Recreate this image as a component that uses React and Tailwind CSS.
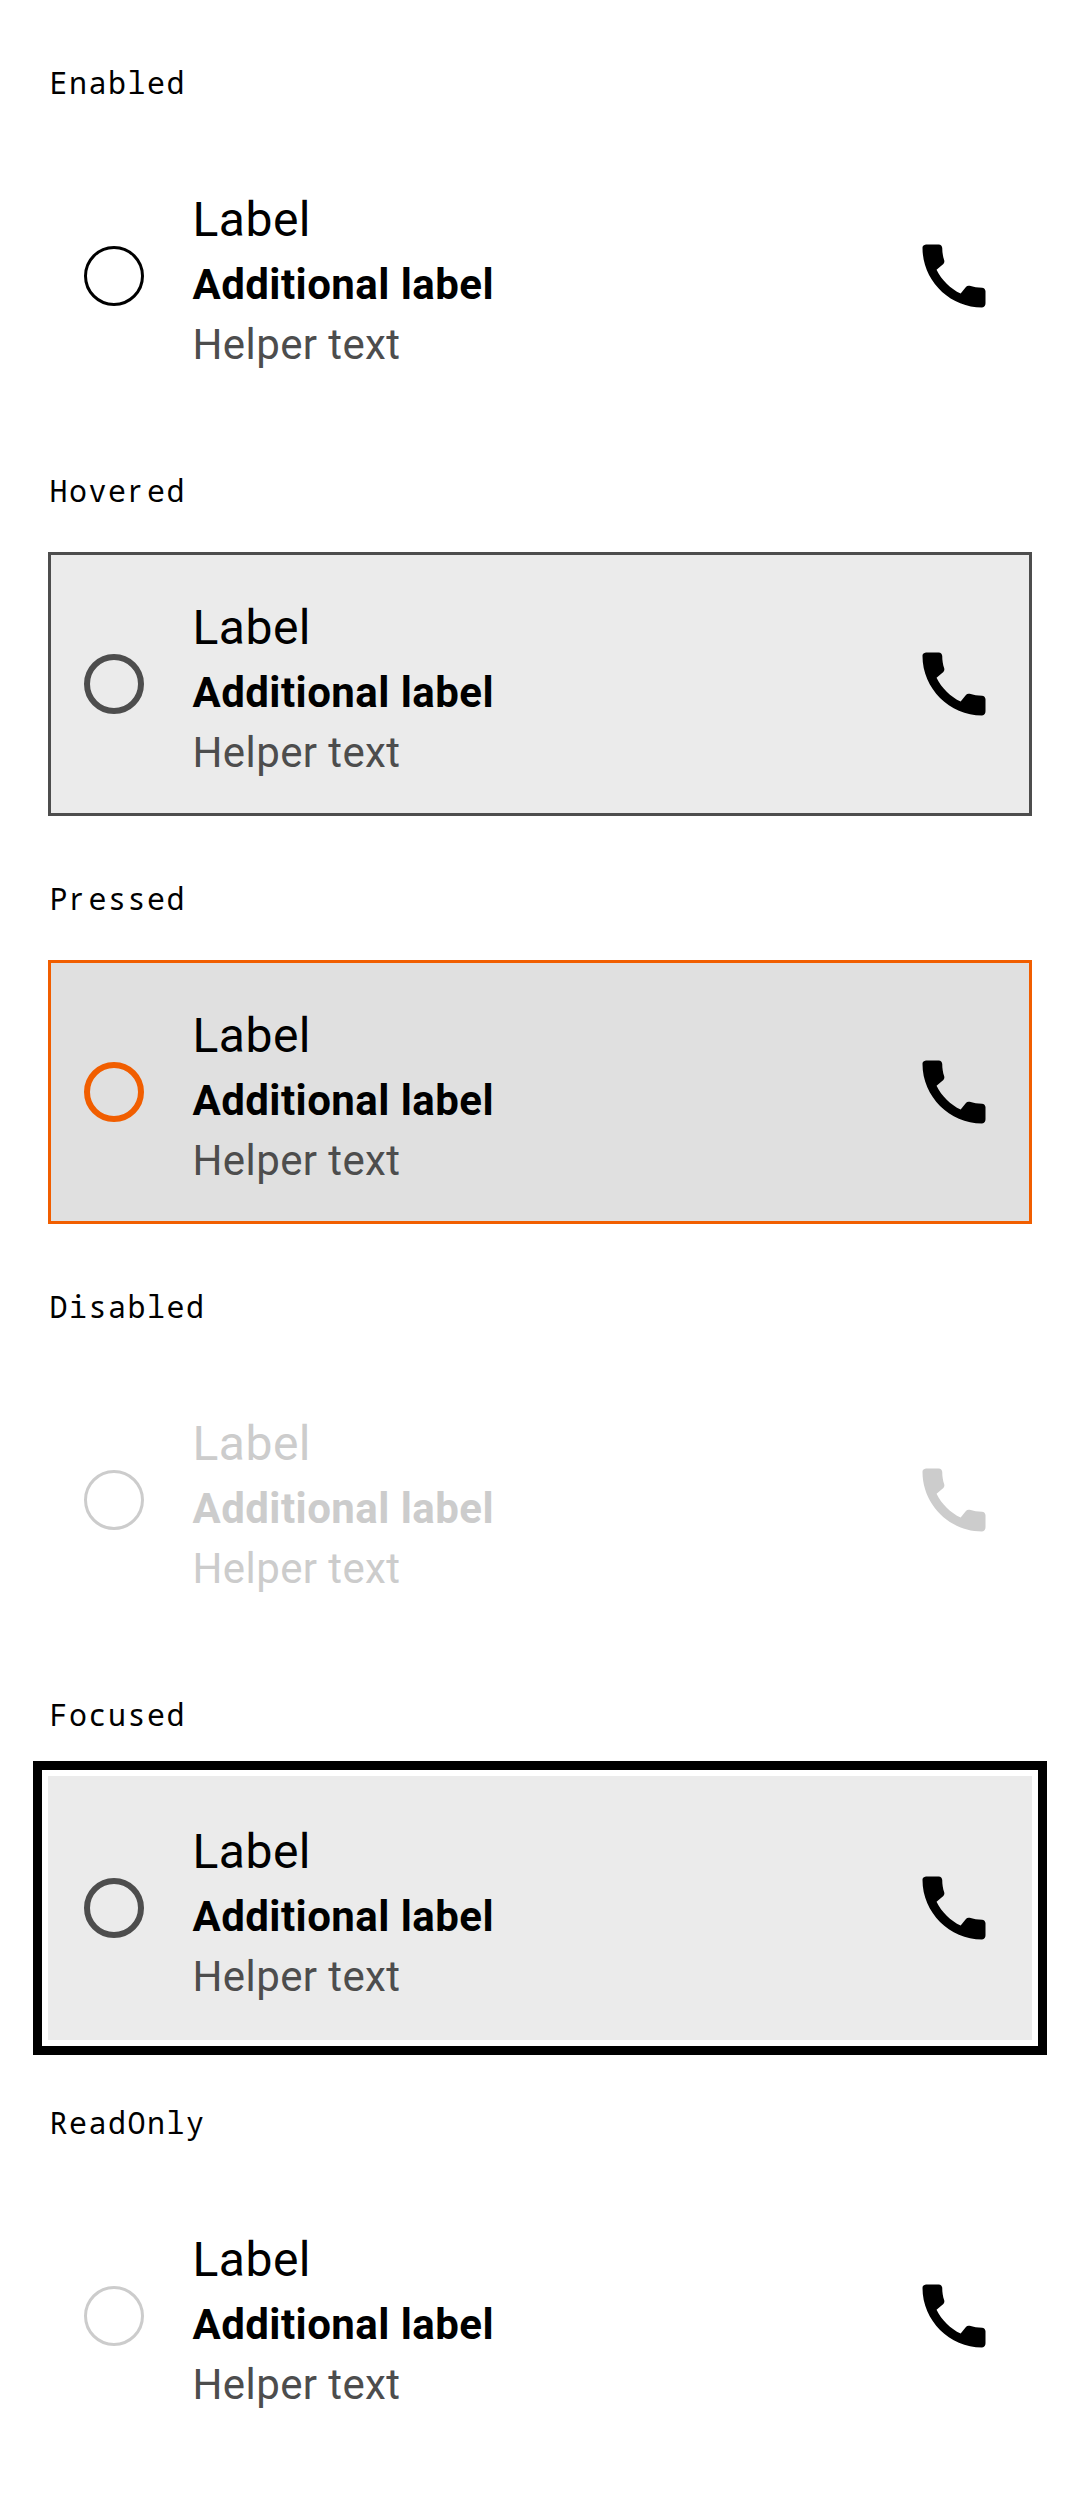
const rows = [
  ["Enabled", "bg-white border-transparent", "border-[3px] border-black", false],
  ["Hovered", "bg-[#ebebeb] border-[#4d4d4d]", "border-[6px] border-[#4d4d4d]", false],
  ["Pressed", "bg-[#e0e0e0] border-[#f15e00]", "border-[6px] border-[#f15e00]", false],
  ["Disabled", "bg-white border-transparent", "border-[3px] border-[#cccccc]", true],
  ["Focused", "bg-[#ebebeb] border-transparent outline-[9px] outline-black outline-offset-[6px]", "border-[6px] border-[#4d4d4d]", false],
  ["ReadOnly", "bg-white border-transparent", "border-[3px] border-[#cccccc]", false],
];

// The monospace heading uses a serif-less "r", padded to the width of one cell.
function MonoText({ children }) {
  return children.split(/(r)/).map((part, i) =>
    part === "r" ? (
      <span key={i} className="pl-[1px] pr-[4.6px] font-['Noto_Sans',sans-serif]">r</span>
    ) : (
      part
    ),
  );
}

function Row({ name, box, ring, off }) {
  return (
    <section className="h-[408px]">
      <h2 className="h-[72px] pt-[14px] pl-[1.5px] text-[30px] leading-[42px] tracking-[1.5px] font-['Noto_Sans_Mono','DejaVu_Sans_Mono',monospace]">
        <MonoText>{name}</MonoText>
      </h2>
      <div className={`mt-[24px] flex h-[264px] items-center border-[3px] px-[33px] ${box} ${off ? "text-[#cccccc]" : "text-black"}`}>
        <span className={`size-[60px] rounded-full ${ring}`} />
        <div className="ml-[48.5px] flex-1 pt-[7px]">
          <p className="text-[48px] leading-[71px] tracking-[0.5px]">Label</p>
          <p className="text-[42px] leading-[60px] tracking-[0.45px] font-bold">Additional label</p>
          <p className={`text-[42px] leading-[60px] tracking-[0.4px] ${off ? "" : "text-[#4d4d4d]"}`}>Helper text</p>
        </div>
        <svg className="size-[84px]" viewBox="0 0 24 24" fill="currentColor">
          <path d="M20.01 15.38c-1.23 0-2.42-.2-3.53-.56-.35-.12-.74-.03-1.01.24l-1.57 1.97c-2.83-1.35-5.48-3.9-6.89-6.83l1.95-1.66c.27-.28.35-.67.24-1.02-.37-1.11-.56-2.3-.56-3.53 0-.54-.45-.99-.99-.99H4.19C3.65 3 3 3.24 3 3.99 3 13.28 10.73 21 20.01 21c.71 0 .99-.63.99-1.18v-3.45c0-.54-.45-.99-.99-.99z" />
        </svg>
      </div>
    </section>
  );
}

export default function App() {
  return (
    <main className="h-[2496px] w-[1080px] overflow-hidden bg-white px-[48px] pt-[48px] font-[Roboto,sans-serif]">
      {rows.map(([name, box, ring, off]) => (
        <Row key={name} name={name} box={box} ring={ring} off={off} />
      ))}
    </main>
  );
}
